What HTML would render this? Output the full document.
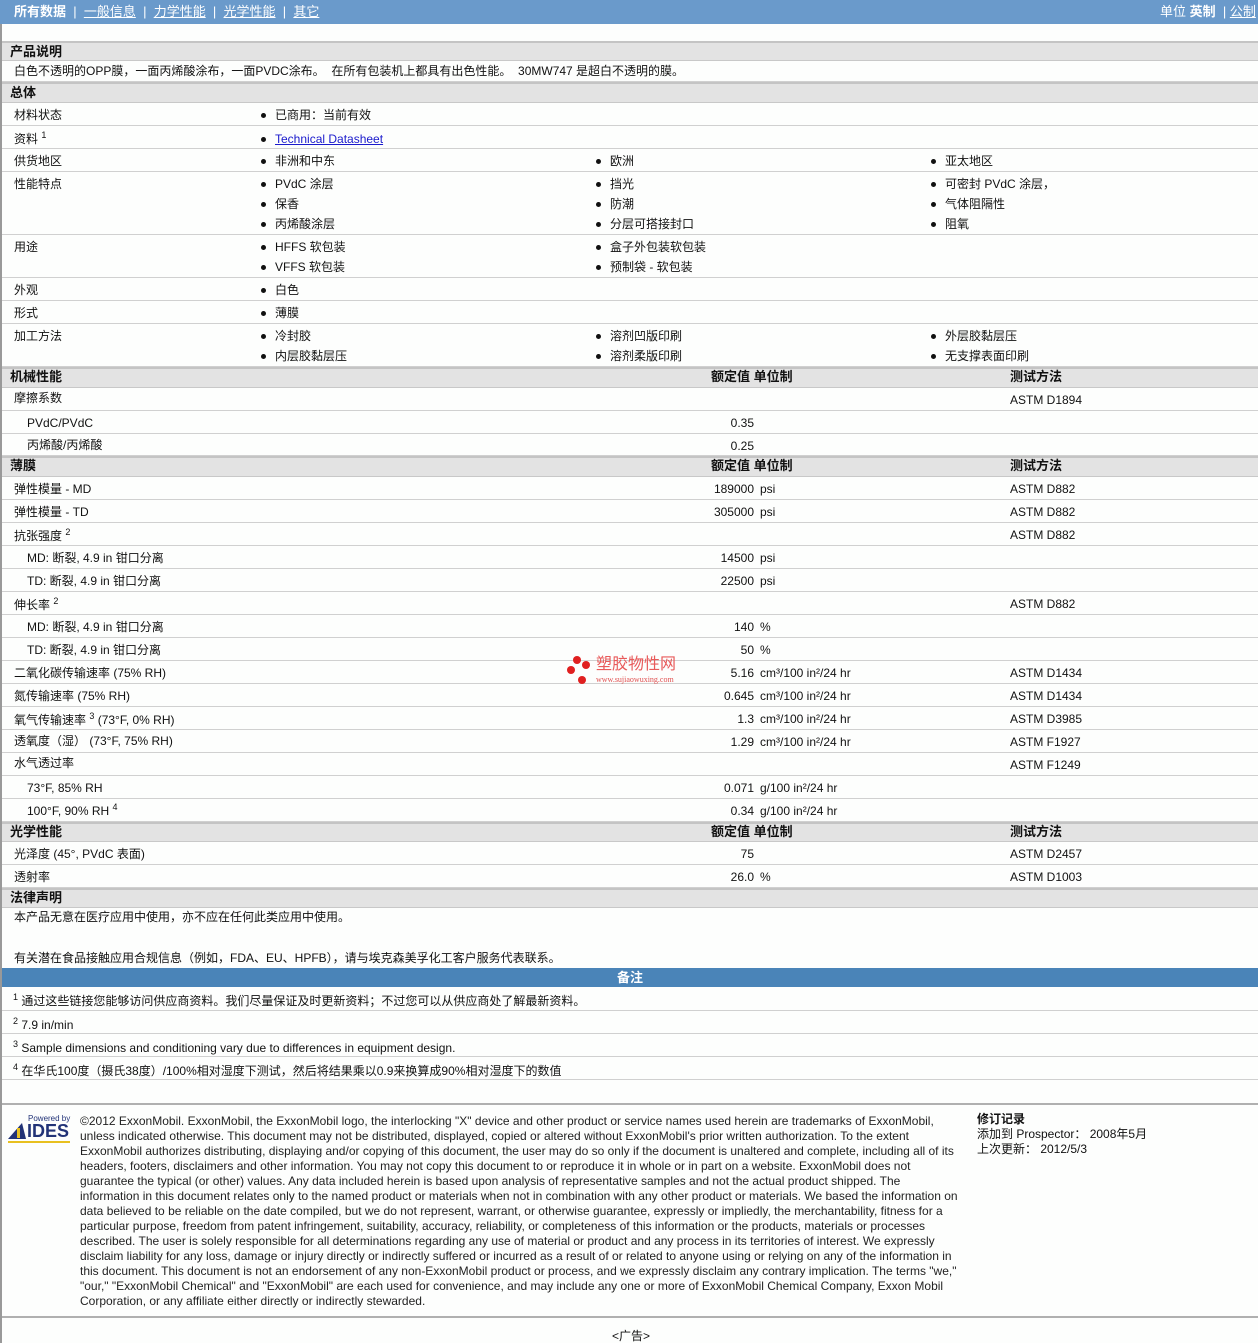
<!DOCTYPE html>
<html><head><meta charset="utf-8"><style>
*{margin:0;padding:0;box-sizing:border-box}
body{width:1258px;height:1343px;position:relative;background:#fdfefd;font-family:"Liberation Sans","Noto Sans CJK SC",sans-serif;font-size:12px;color:#111;overflow:hidden}
.a{position:absolute}
.row{position:absolute;left:2px;width:1256px;border-bottom:1px solid #d0d0d0}
.hd{position:absolute;left:2px;width:1256px;background:#e3e3e3;border-top:2px solid #c4c4c4;border-bottom:1px solid #c8c8c8;font-weight:bold;font-size:13px}
.t{position:absolute;line-height:14px;white-space:nowrap}
.b::before{content:"";position:absolute;left:-14px;top:5px;width:5px;height:5px;border-radius:50%;background:#111}
.v{position:absolute;right:504px;line-height:14px;text-align:right}
sup{font-size:9px;vertical-align:baseline;position:relative;top:-5px;line-height:0}
</style></head><body>
<div class="a" style="left:0;top:0;width:2px;height:1343px;background:#999"></div>
<div class="a" style="left:0;top:0;width:1258px;height:24px;background:#6a9acb;color:#fff;font-size:13px;line-height:24px">
<span class="a" style="left:14px"><b>所有数据</b> &nbsp;| &nbsp;<u>一般信息</u> &nbsp;| &nbsp;<u>力学性能</u> &nbsp;| &nbsp;<u>光学性能</u> &nbsp;| &nbsp;<u>其它</u></span>
<span class="a" style="left:1160px">单位 <b>英制</b> &nbsp;| <u>公制</u></span></div>

<div class="hd" style="top:41px;height:20px"><span class="t" style="left:8px;top:2px">产品说明</span></div>
<div class="row" style="top:61px;height:21px"><span class="t" style="left:12px;top:3px">白色不透明的OPP膜，一面丙烯酸涂布，一面PVDC涂布。 &nbsp;在所有包装机上都具有出色性能。 &nbsp;30MW747 是超白不透明的膜。</span></div>
<div class="hd" style="top:82px;height:21px"><span class="t" style="left:8px;top:2px">总体</span></div>
<div class="row" style="top:103px;height:23px"><span class="t" style="left:12px;top:5px">材料状态</span><span class="t b" style="left:273px;top:5px">已商用：当前有效</span></div>
<div class="row" style="top:126px;height:23px"><span class="t" style="left:12px;top:6px">资料 <sup>1</sup></span><span class="t b" style="left:273px;top:6px"><u style="color:#1a1acc">Technical Datasheet</u></span></div>
<div class="row" style="top:149px;height:23px"><span class="t" style="left:12px;top:5px">供货地区</span><span class="t b" style="left:273px;top:5px">非洲和中东</span><span class="t b" style="left:608px;top:5px">欧洲</span><span class="t b" style="left:943px;top:5px">亚太地区</span></div>
<div class="row" style="top:172px;height:63px"><span class="t" style="left:12px;top:5px">性能特点</span>
<span class="t b" style="left:273px;top:5px">PVdC 涂层</span><span class="t b" style="left:273px;top:25px">保香</span><span class="t b" style="left:273px;top:45px">丙烯酸涂层</span>
<span class="t b" style="left:608px;top:5px">挡光</span><span class="t b" style="left:608px;top:25px">防潮</span><span class="t b" style="left:608px;top:45px">分层可搭接封口</span>
<span class="t b" style="left:943px;top:5px">可密封 PVdC 涂层，</span><span class="t b" style="left:943px;top:25px">气体阻隔性</span><span class="t b" style="left:943px;top:45px">阻氧</span></div>
<div class="row" style="top:235px;height:43px"><span class="t" style="left:12px;top:5px">用途</span>
<span class="t b" style="left:273px;top:5px">HFFS 软包装</span><span class="t b" style="left:273px;top:25px">VFFS 软包装</span>
<span class="t b" style="left:608px;top:5px">盒子外包装软包装</span><span class="t b" style="left:608px;top:25px">预制袋 - 软包装</span></div>
<div class="row" style="top:278px;height:23px"><span class="t" style="left:12px;top:5px">外观</span><span class="t b" style="left:273px;top:5px">白色</span></div>
<div class="row" style="top:301px;height:23px"><span class="t" style="left:12px;top:5px">形式</span><span class="t b" style="left:273px;top:5px">薄膜</span></div>
<div class="row" style="top:324px;height:43px"><span class="t" style="left:12px;top:5px">加工方法</span>
<span class="t b" style="left:273px;top:5px">冷封胶</span><span class="t b" style="left:273px;top:25px">内层胶黏层压</span>
<span class="t b" style="left:608px;top:5px">溶剂凹版印刷</span><span class="t b" style="left:608px;top:25px">溶剂柔版印刷</span>
<span class="t b" style="left:943px;top:5px">外层胶黏层压</span><span class="t b" style="left:943px;top:25px">无支撑表面印刷</span></div>

<div class="hd" style="top:367px;height:21px"><span class="t" style="left:8px;top:1px">机械性能</span><span class="t" style="left:709px;top:1px">额定值 单位制</span><span class="t" style="left:1008px;top:1px">测试方法</span></div>
<div class="row" style="top:388px;height:23px"><span class="t" style="left:12px;top:3px">摩擦系数</span><span class="t" style="left:1008px;top:5px">ASTM D1894</span></div>
<div class="row" style="top:411px;height:23px"><span class="t" style="left:25px;top:5px">PVdC/PVdC</span><span class="v" style="top:5px">0.35</span></div>
<div class="row" style="top:434px;height:22px"><span class="t" style="left:25px;top:4px">丙烯酸/丙烯酸</span><span class="v" style="top:5px">0.25</span></div>

<div class="hd" style="top:456px;height:21px"><span class="t" style="left:8px;top:1px">薄膜</span><span class="t" style="left:709px;top:1px">额定值 单位制</span><span class="t" style="left:1008px;top:1px">测试方法</span></div>
<div class="row" style="top:477px;height:23px"><span class="t" style="left:12px;top:5px">弹性模量 - MD</span><span class="v" style="top:5px">189000</span><span class="t" style="left:758px;top:5px">psi</span><span class="t" style="left:1008px;top:5px">ASTM D882</span></div>
<div class="row" style="top:500px;height:23px"><span class="t" style="left:12px;top:5px">弹性模量 - TD</span><span class="v" style="top:5px">305000</span><span class="t" style="left:758px;top:5px">psi</span><span class="t" style="left:1008px;top:5px">ASTM D882</span></div>
<div class="row" style="top:523px;height:23px"><span class="t" style="left:12px;top:6px">抗张强度 <sup>2</sup></span><span class="t" style="left:1008px;top:5px">ASTM D882</span></div>
<div class="row" style="top:546px;height:23px"><span class="t" style="left:25px;top:5px">MD: 断裂, 4.9 in 钳口分离</span><span class="v" style="top:5px">14500</span><span class="t" style="left:758px;top:5px">psi</span></div>
<div class="row" style="top:569px;height:23px"><span class="t" style="left:25px;top:5px">TD: 断裂, 4.9 in 钳口分离</span><span class="v" style="top:5px">22500</span><span class="t" style="left:758px;top:5px">psi</span></div>
<div class="row" style="top:592px;height:23px"><span class="t" style="left:12px;top:6px">伸长率 <sup>2</sup></span><span class="t" style="left:1008px;top:5px">ASTM D882</span></div>
<div class="row" style="top:615px;height:23px"><span class="t" style="left:25px;top:5px">MD: 断裂, 4.9 in 钳口分离</span><span class="v" style="top:5px">140</span><span class="t" style="left:758px;top:5px">%</span></div>
<div class="row" style="top:638px;height:23px"><span class="t" style="left:25px;top:5px">TD: 断裂, 4.9 in 钳口分离</span><span class="v" style="top:5px">50</span><span class="t" style="left:758px;top:5px">%</span></div>
<div class="row" style="top:661px;height:23px"><span class="t" style="left:12px;top:5px">二氧化碳传输速率 (75% RH)</span><span class="v" style="top:5px">5.16</span><span class="t" style="left:758px;top:5px">cm³/100 in²/24 hr</span><span class="t" style="left:1008px;top:5px">ASTM D1434</span></div>
<div class="row" style="top:684px;height:23px"><span class="t" style="left:12px;top:5px">氮传输速率 (75% RH)</span><span class="v" style="top:5px">0.645</span><span class="t" style="left:758px;top:5px">cm³/100 in²/24 hr</span><span class="t" style="left:1008px;top:5px">ASTM D1434</span></div>
<div class="row" style="top:707px;height:23px"><span class="t" style="left:12px;top:6px">氧气传输速率 <sup>3</sup> (73°F, 0% RH)</span><span class="v" style="top:5px">1.3</span><span class="t" style="left:758px;top:5px">cm³/100 in²/24 hr</span><span class="t" style="left:1008px;top:5px">ASTM D3985</span></div>
<div class="row" style="top:730px;height:23px"><span class="t" style="left:12px;top:4px">透氧度（湿） (73°F, 75% RH)</span><span class="v" style="top:5px">1.29</span><span class="t" style="left:758px;top:5px">cm³/100 in²/24 hr</span><span class="t" style="left:1008px;top:5px">ASTM F1927</span></div>
<div class="row" style="top:753px;height:23px"><span class="t" style="left:12px;top:3px">水气透过率</span><span class="t" style="left:1008px;top:5px">ASTM F1249</span></div>
<div class="row" style="top:776px;height:23px"><span class="t" style="left:25px;top:5px">73°F, 85% RH</span><span class="v" style="top:5px">0.071</span><span class="t" style="left:758px;top:5px">g/100 in²/24 hr</span></div>
<div class="row" style="top:799px;height:23px"><span class="t" style="left:25px;top:5px">100°F, 90% RH <sup>4</sup></span><span class="v" style="top:5px">0.34</span><span class="t" style="left:758px;top:5px">g/100 in²/24 hr</span></div>

<div class="hd" style="top:822px;height:20px"><span class="t" style="left:8px;top:1px">光学性能</span><span class="t" style="left:709px;top:1px">额定值 单位制</span><span class="t" style="left:1008px;top:1px">测试方法</span></div>
<div class="row" style="top:842px;height:23px"><span class="t" style="left:12px;top:5px">光泽度 (45°, PVdC 表面)</span><span class="v" style="top:5px">75</span><span class="t" style="left:1008px;top:5px">ASTM D2457</span></div>
<div class="row" style="top:865px;height:23px"><span class="t" style="left:12px;top:5px">透射率</span><span class="v" style="top:5px">26.0</span><span class="t" style="left:758px;top:5px">%</span><span class="t" style="left:1008px;top:5px">ASTM D1003</span></div>

<div class="hd" style="top:888px;height:20px"><span class="t" style="left:8px;top:1px">法律声明</span></div>
<span class="t" style="left:14px;top:910px">本产品无意在医疗应用中使用，亦不应在任何此类应用中使用。</span>
<span class="t" style="left:14px;top:951px">有关潜在食品接触应用合规信息（例如，FDA、EU、HPFB），请与埃克森美孚化工客户服务代表联系。</span>
<div class="a" style="left:2px;top:968px;width:1256px;height:19px;background:#4a84b8;color:#fff;font-weight:bold;font-size:13px;text-align:center;line-height:19px">备注</div>
<div class="row" style="top:987px;height:24px"><span class="t" style="left:11px;top:7px"><sup>1</sup> 通过这些链接您能够访问供应商资料。我们尽量保证及时更新资料；不过您可以从供应商处了解最新资料。</span></div>
<div class="row" style="top:1011px;height:23px"><span class="t" style="left:11px;top:7px"><sup>2</sup> 7.9 in/min</span></div>
<div class="row" style="top:1034px;height:23px"><span class="t" style="left:11px;top:7px"><sup>3</sup> Sample dimensions and conditioning vary due to differences in equipment design.</span></div>
<div class="row" style="top:1057px;height:23px"><span class="t" style="left:11px;top:7px"><sup>4</sup> 在华氏100度（摄氏38度）/100%相对湿度下测试，然后将结果乘以0.9来换算成90%相对湿度下的数值</span></div>

<div class="a" style="left:565px;top:654px;width:140px;height:36px">
<div class="a" style="left:8px;top:2px;width:8px;height:8px;border-radius:50%;background:#e02020"></div>
<div class="a" style="left:17px;top:7px;width:8px;height:8px;border-radius:50%;background:#e02020"></div>
<div class="a" style="left:2px;top:12px;width:8px;height:8px;border-radius:50%;background:#e02020"></div>
<div class="a" style="left:13px;top:22px;width:8px;height:8px;border-radius:50%;background:#e02020"></div>
<span class="t" style="left:31px;top:2px;font-size:16px;line-height:18px;color:#e85a5a">塑胶物性网</span>
<span class="t" style="left:31px;top:21px;font-size:8px;line-height:10px;color:#e05050;font-family:'Liberation Serif',serif">www.sujiaowuxing.com</span></div>

<div class="a" style="left:2px;top:1103px;width:1256px;height:215px;border-top:2px solid #b0b0b0;border-bottom:2px solid #b0b0b0"></div>
<div class="a" style="left:8px;top:1114px;width:62px;height:28px">
<span class="t" style="left:20px;top:0;font-size:8px;line-height:9px;color:#223377">Powered by</span>
<svg class="a" style="left:0;top:6px" width="20" height="20"><polygon points="0,19 14,3 18,19" fill="#223377"/><rect x="9" y="8" width="3" height="10" fill="#e8c020"/></svg>
<span class="t" style="left:19px;top:8px;font-size:18px;line-height:18px;font-weight:bold;color:#223377">IDES</span>
<div class="a" style="left:0;top:27px;width:62px;height:2px;background:#e8c020"></div></div>
<div class="a" style="left:80px;top:1114px;width:880px;font-size:12px;line-height:15px;color:#222">©2012 ExxonMobil. ExxonMobil, the ExxonMobil logo, the interlocking "X" device and other product or service names used herein are trademarks of ExxonMobil, unless indicated otherwise. This document may not be distributed, displayed, copied or altered without ExxonMobil's prior written authorization. To the extent ExxonMobil authorizes distributing, displaying and/or copying of this document, the user may do so only if the document is unaltered and complete, including all of its headers, footers, disclaimers and other information. You may not copy this document to or reproduce it in whole or in part on a website. ExxonMobil does not guarantee the typical (or other) values. Any data included herein is based upon analysis of representative samples and not the actual product shipped. The information in this document relates only to the named product or materials when not in combination with any other product or materials. We based the information on data believed to be reliable on the date compiled, but we do not represent, warrant, or otherwise guarantee, expressly or impliedly, the merchantability, fitness for a particular purpose, freedom from patent infringement, suitability, accuracy, reliability, or completeness of this information or the products, materials or processes described. The user is solely responsible for all determinations regarding any use of material or product and any process in its territories of interest. We expressly disclaim liability for any loss, damage or injury directly or indirectly suffered or incurred as a result of or related to anyone using or relying on any of the information in this document. This document is not an endorsement of any non-ExxonMobil product or process, and we expressly disclaim any contrary implication. The terms "we," "our," "ExxonMobil Chemical" and "ExxonMobil" are each used for convenience, and may include any one or more of ExxonMobil Chemical Company, Exxon Mobil Corporation, or any affiliate either directly or indirectly stewarded.</div>
<div class="a" style="left:977px;top:1112px;line-height:15px;font-size:12px"><b>修订记录</b><br>添加到 Prospector： 2008年5月<br>上次更新： 2012/5/3</div>
<span class="t" style="left:612px;top:1329px">&lt;广告&gt;</span>
</body></html>
